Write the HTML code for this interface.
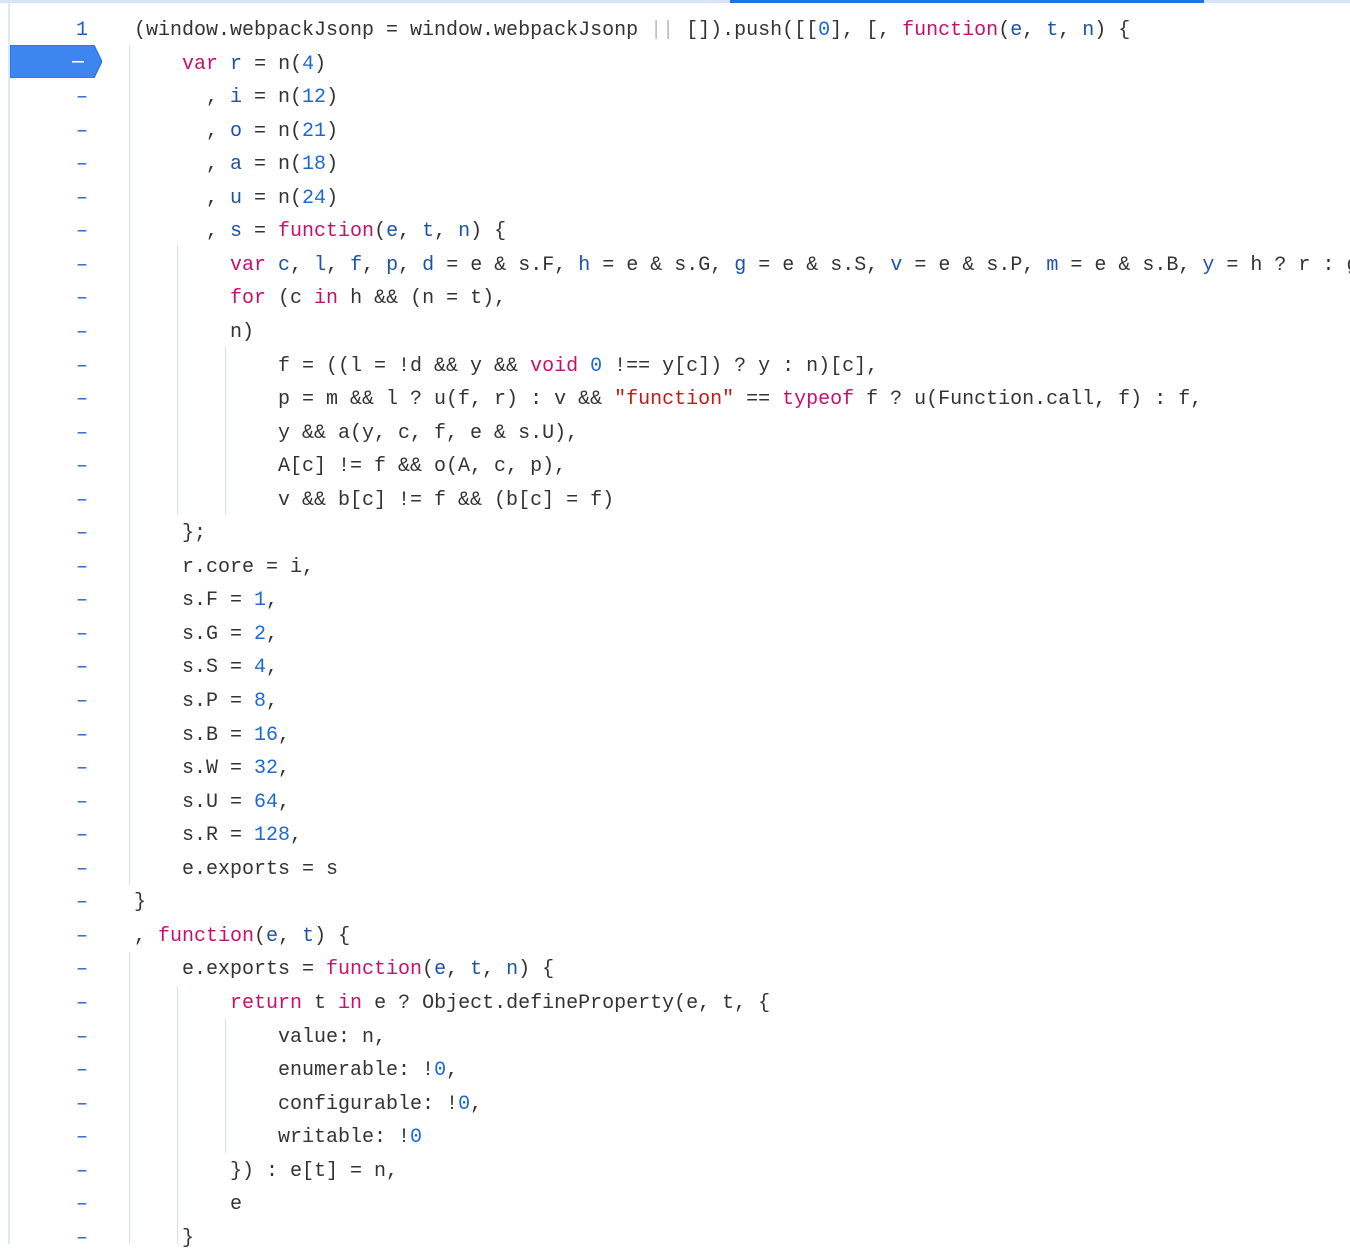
<!DOCTYPE html>
<html><head><meta charset="utf-8"><style>
body{margin:0;width:1350px;height:1244px;background:#fff;overflow:hidden;position:relative;font-family:"Liberation Mono","Noto Sans CJK SC",monospace;}
.topbar{position:absolute;left:0;top:0;width:1350px;height:3px;background:#d6e4fa}
.topbar2{position:absolute;left:730px;top:0;width:474px;height:3px;background:#1a73e8}
.lb{position:absolute;left:8px;top:3px;width:2px;height:1241px;background:#dde8f8}
.ln{position:absolute;left:30px;width:58px;text-align:right;font-size:20px;color:#1a5fc8;line-height:33.55px;height:33.55px;margin-top:3px}
.c{position:absolute;left:134px;font-size:20px;line-height:33.55px;white-space:pre;color:#333;margin-top:3px}
.k{color:#c5106e}.v{color:#1c52a8}.n{color:#1a6ad6}.s{color:#c41a16}
.g{position:absolute;width:1px;background:#d4e0f0}
.mark{position:absolute;left:10px;top:45px;width:92px;height:33px}
</style></head><body>
<div class="topbar"></div><div class="topbar2"></div><div class="lb"></div>
<svg class="mark" viewBox="0 0 92 33"><path d="M0 0H84L92 16.5L84 33H0Z" fill="#3d86f0" stroke="#1a6ae0" stroke-width="1"/><rect x="62" y="16" width="12" height="1.6" fill="#fff"/></svg>
<div class="g" style="left:129px;top:45px;height:840px"></div>
<div class="g" style="left:129px;top:952px;height:292px"></div>
<div class="g" style="left:177px;top:246px;height:269px"></div>
<div class="g" style="left:177px;top:986px;height:258px"></div>
<div class="g" style="left:225px;top:347px;height:168px"></div>
<div class="g" style="left:225px;top:1019px;height:134px"></div>
<div class="ln" style="top:11px">1</div>
<div class="ln" style="top:78.1px">–</div><div class="ln" style="top:111.65px">–</div><div class="ln" style="top:145.2px">–</div><div class="ln" style="top:178.75px">–</div><div class="ln" style="top:212.3px">–</div><div class="ln" style="top:245.85px">–</div><div class="ln" style="top:279.4px">–</div><div class="ln" style="top:312.95px">–</div><div class="ln" style="top:346.5px">–</div><div class="ln" style="top:380.05px">–</div><div class="ln" style="top:413.6px">–</div><div class="ln" style="top:447.15px">–</div><div class="ln" style="top:480.7px">–</div><div class="ln" style="top:514.25px">–</div><div class="ln" style="top:547.8px">–</div><div class="ln" style="top:581.35px">–</div><div class="ln" style="top:614.9px">–</div><div class="ln" style="top:648.45px">–</div><div class="ln" style="top:682px">–</div><div class="ln" style="top:715.55px">–</div><div class="ln" style="top:749.1px">–</div><div class="ln" style="top:782.65px">–</div><div class="ln" style="top:816.2px">–</div><div class="ln" style="top:849.75px">–</div><div class="ln" style="top:883.3px">–</div><div class="ln" style="top:916.85px">–</div><div class="ln" style="top:950.4px">–</div><div class="ln" style="top:983.95px">–</div><div class="ln" style="top:1017.5px">–</div><div class="ln" style="top:1051.05px">–</div><div class="ln" style="top:1084.6px">–</div><div class="ln" style="top:1118.15px">–</div><div class="ln" style="top:1151.7px">–</div><div class="ln" style="top:1185.25px">–</div><div class="ln" style="top:1218.8px">–</div>

<div class="c" style="top:11px">(window.webpackJsonp = window.webpackJsonp <span style="color:#bbb">||</span> []).push([[<span class="n">0</span>], [, <span class="k">function</span>(<span class="v">e</span>, <span class="v">t</span>, <span class="v">n</span>) {</div>
<div class="c" style="top:44.55px">    <span class="k">var</span> <span class="v">r</span> = n(<span class="n">4</span>)</div>
<div class="c" style="top:78.1px">      , <span class="v">i</span> = n(<span class="n">12</span>)</div>
<div class="c" style="top:111.65px">      , <span class="v">o</span> = n(<span class="n">21</span>)</div>
<div class="c" style="top:145.2px">      , <span class="v">a</span> = n(<span class="n">18</span>)</div>
<div class="c" style="top:178.75px">      , <span class="v">u</span> = n(<span class="n">24</span>)</div>
<div class="c" style="top:212.3px">      , <span class="v">s</span> = <span class="k">function</span>(<span class="v">e</span>, <span class="v">t</span>, <span class="v">n</span>) {</div>
<div class="c" style="top:245.85px">        <span class="k">var</span> <span class="v">c</span>, <span class="v">l</span>, <span class="v">f</span>, <span class="v">p</span>, <span class="v">d</span> = e &amp; s.F, <span class="v">h</span> = e &amp; s.G, <span class="v">g</span> = e &amp; s.S, <span class="v">v</span> = e &amp; s.P, <span class="v">m</span> = e &amp; s.B, <span class="v">y</span> = h ? r : g</div>
<div class="c" style="top:279.4px">        <span class="k">for</span> (c <span class="k">in</span> h &amp;&amp; (n = t),</div>
<div class="c" style="top:312.95px">        n)</div>
<div class="c" style="top:346.5px">            f = ((l = !d &amp;&amp; y &amp;&amp; <span class="k">void</span> <span class="n">0</span> !== y[c]) ? y : n)[c],</div>
<div class="c" style="top:380.05px">            p = m &amp;&amp; l ? u(f, r) : v &amp;&amp; <span class="s">"function"</span> == <span class="k">typeof</span> f ? u(Function.call, f) : f,</div>
<div class="c" style="top:413.6px">            y &amp;&amp; a(y, c, f, e &amp; s.U),</div>
<div class="c" style="top:447.15px">            A[c] != f &amp;&amp; o(A, c, p),</div>
<div class="c" style="top:480.7px">            v &amp;&amp; b[c] != f &amp;&amp; (b[c] = f)</div>
<div class="c" style="top:514.25px">    };</div>
<div class="c" style="top:547.8px">    r.core = i,</div>
<div class="c" style="top:581.35px">    s.F = <span class="n">1</span>,</div>
<div class="c" style="top:614.9px">    s.G = <span class="n">2</span>,</div>
<div class="c" style="top:648.45px">    s.S = <span class="n">4</span>,</div>
<div class="c" style="top:682px">    s.P = <span class="n">8</span>,</div>
<div class="c" style="top:715.55px">    s.B = <span class="n">16</span>,</div>
<div class="c" style="top:749.1px">    s.W = <span class="n">32</span>,</div>
<div class="c" style="top:782.65px">    s.U = <span class="n">64</span>,</div>
<div class="c" style="top:816.2px">    s.R = <span class="n">128</span>,</div>
<div class="c" style="top:849.75px">    e.exports = s</div>
<div class="c" style="top:883.3px">}</div>
<div class="c" style="top:916.85px">, <span class="k">function</span>(<span class="v">e</span>, <span class="v">t</span>) {</div>
<div class="c" style="top:950.4px">    e.exports = <span class="k">function</span>(<span class="v">e</span>, <span class="v">t</span>, <span class="v">n</span>) {</div>
<div class="c" style="top:983.95px">        <span class="k">return</span> t <span class="k">in</span> e ? Object.defineProperty(e, t, {</div>
<div class="c" style="top:1017.5px">            value: n,</div>
<div class="c" style="top:1051.05px">            enumerable: !<span class="n">0</span>,</div>
<div class="c" style="top:1084.6px">            configurable: !<span class="n">0</span>,</div>
<div class="c" style="top:1118.15px">            writable: !<span class="n">0</span></div>
<div class="c" style="top:1151.7px">        }) : e[t] = n,</div>
<div class="c" style="top:1185.25px">        e</div>
<div class="c" style="top:1218.8px">    }</div>
</body></html>
